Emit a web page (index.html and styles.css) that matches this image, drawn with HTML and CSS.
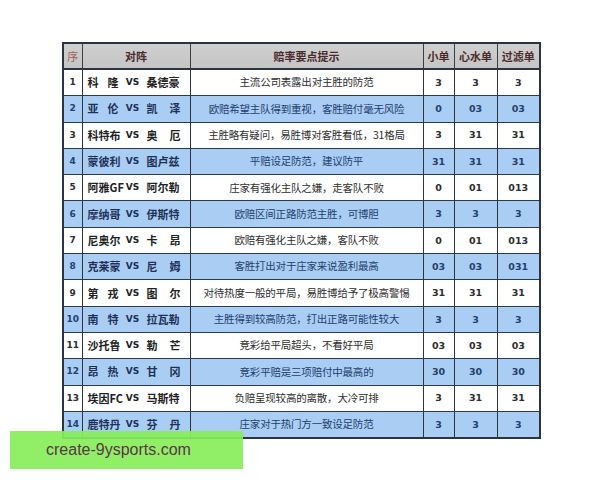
FILE: index.html
```html
<!DOCTYPE html>
<html lang="zh-CN">
<head>
<meta charset="utf-8">
<title>赔率要点提示</title>
<link rel="stylesheet" href="styles.css">
</head>
<body>
<div class="page">
  <table class="odds">
    <colgroup>
      <col class="c-no"><col class="c-match"><col class="c-tip"><col class="c-a"><col class="c-b"><col class="c-c">
    </colgroup>
    <thead>
      <tr><th class="h-no">序</th><th>对阵</th><th>赔率要点提示</th><th>小单</th><th>心水单</th><th>过滤单</th></tr>
    </thead>
    <tbody>
      <tr><td class="no">1</td><td><div class="m"><span class="t j">科隆</span><span class="vs">VS</span><span class="t">桑德豪</span></div></td><td class="tip">主流公司表露出对主胜的防范</td><td class="n">3</td><td class="n">3</td><td class="n">3</td></tr>
      <tr class="blue"><td class="no">2</td><td><div class="m"><span class="t j">亚伦</span><span class="vs">VS</span><span class="t j">凯泽</span></div></td><td class="tip">欧赔希望主队得到重视，客胜赔付毫无风险</td><td class="n">0</td><td class="n">03</td><td class="n">03</td></tr>
      <tr><td class="no">3</td><td><div class="m"><span class="t">科特布</span><span class="vs">VS</span><span class="t j">奥厄</span></div></td><td class="tip">主胜略有疑问，易胜博对客胜看低，31格局</td><td class="n">3</td><td class="n">31</td><td class="n">31</td></tr>
      <tr class="blue"><td class="no">4</td><td><div class="m"><span class="t">蒙彼利</span><span class="vs">VS</span><span class="t">图卢兹</span></div></td><td class="tip">平赔设足防范，建议防平</td><td class="n">31</td><td class="n">31</td><td class="n">31</td></tr>
      <tr><td class="no">5</td><td><div class="m"><span class="t">阿雅GF</span><span class="vs">VS</span><span class="t">阿尔勒</span></div></td><td class="tip">庄家有强化主队之嫌，走客队不败</td><td class="n">0</td><td class="n">01</td><td class="n">013</td></tr>
      <tr class="blue"><td class="no">6</td><td><div class="m"><span class="t">摩纳哥</span><span class="vs">VS</span><span class="t">伊斯特</span></div></td><td class="tip">欧赔区间正路防范主胜，可博胆</td><td class="n">3</td><td class="n">3</td><td class="n">3</td></tr>
      <tr><td class="no">7</td><td><div class="m"><span class="t">尼奥尔</span><span class="vs">VS</span><span class="t j">卡昂</span></div></td><td class="tip">欧赔有强化主队之嫌，客队不败</td><td class="n">0</td><td class="n">01</td><td class="n">013</td></tr>
      <tr class="blue"><td class="no">8</td><td><div class="m"><span class="t">克莱蒙</span><span class="vs">VS</span><span class="t j">尼姆</span></div></td><td class="tip">客胜打出对于庄家来说盈利最高</td><td class="n">03</td><td class="n">03</td><td class="n">031</td></tr>
      <tr><td class="no">9</td><td><div class="m"><span class="t j">第戎</span><span class="vs">VS</span><span class="t j">图尔</span></div></td><td class="tip">对待热度一般的平局，易胜博给予了极高警惕</td><td class="n">31</td><td class="n">31</td><td class="n">31</td></tr>
      <tr class="blue"><td class="no">10</td><td><div class="m"><span class="t j">南特</span><span class="vs">VS</span><span class="t">拉瓦勒</span></div></td><td class="tip">主胜得到较高防范，打出正路可能性较大</td><td class="n">3</td><td class="n">3</td><td class="n">3</td></tr>
      <tr><td class="no">11</td><td><div class="m"><span class="t">沙托鲁</span><span class="vs">VS</span><span class="t j">勒芒</span></div></td><td class="tip">竞彩给平局超头，不看好平局</td><td class="n">03</td><td class="n">03</td><td class="n">03</td></tr>
      <tr class="blue"><td class="no">12</td><td><div class="m"><span class="t j">昂热</span><span class="vs">VS</span><span class="t j">甘冈</span></div></td><td class="tip">竞彩平赔是三项赔付中最高的</td><td class="n">30</td><td class="n">30</td><td class="n">30</td></tr>
      <tr><td class="no">13</td><td><div class="m"><span class="t">埃因FC</span><span class="vs">VS</span><span class="t">马斯特</span></div></td><td class="tip">负赔呈现较高的离散，大冷可排</td><td class="n">3</td><td class="n">31</td><td class="n">31</td></tr>
      <tr class="blue"><td class="no">14</td><td><div class="m"><span class="t">鹿特丹</span><span class="vs">VS</span><span class="t j">芬丹</span></div></td><td class="tip">庄家对于热门方一致设足防范</td><td class="n">3</td><td class="n">3</td><td class="n">3</td></tr>
    </tbody>
  </table>
  <div class="badge">create-9ysports.com</div>
</div>
</body>
</html>
```

FILE: styles.css
```css
html, body {
  margin: 0;
  padding: 0;
  background: #ffffff;
}

.page {
  position: relative;
  width: 600px;
  height: 480px;
  padding: 42px 0 0 62px;
  box-sizing: border-box;
  font-family: "Noto Sans CJK SC", "DejaVu Sans", sans-serif;
}

.odds {
  border-collapse: collapse;
  table-layout: fixed;
  width: 477px;
  border: 2px solid #2a3442;
}

.c-no { width: 19px; }
.c-match { width: 108px; }
.c-tip { width: 233px; }
.c-a { width: 31px; }
.c-b { width: 43px; }
.c-c { width: 43px; }

.odds th {
  height: 24px;
  padding: 0;
  background: linear-gradient(#cfcfcf, #c4c4c4);
  border: 1px solid #3a3f46;
  border-bottom: 2px solid #2a3442;
  font-size: 11px;
  font-weight: 700;
  color: #4a2c2c;
  text-align: center;
  line-height: 1;
}

.odds th.h-no {
  font-weight: 400;
  color: #a06060;
}

.odds td {
  height: 25.3px;
  padding: 0;
  border-left: 1px solid #2e3540;
  border-right: 1px solid #2e3540;
  border-bottom: 1px solid #2a3a55;
  color: #2e2e2e;
  text-align: center;
  font-size: 10.5px;
  line-height: 1;
}

.odds tr.blue td {
  background: #a9cdf3;
  color: #25406e;
}

.odds td.no {
  font-family: "DejaVu Sans", sans-serif;
  font-size: 9px;
  font-weight: 700;
}

.odds td.n {
  font-family: "DejaVu Sans", sans-serif;
  font-size: 9.5px;
  font-weight: 700;
}

.odds td.tip {
  font-size: 10.5px;
  letter-spacing: -0.2px;
}

.m {
  display: grid;
  grid-template-columns: 31px 28px 34px;
  align-items: center;
  padding-left: 5px;
  font-weight: 700;
  font-size: 11px;
  color: #222;
}

.blue .m {
  color: #1f3157;
}

.m .t {
  text-align: left;
  white-space: nowrap;
}

.m .t.j {
  text-align: justify;
  text-align-last: justify;
}

.m .vs {
  font-family: "DejaVu Sans", sans-serif;
  font-size: 9px;
  text-align: center;
}

.badge {
  position: absolute;
  left: 10px;
  top: 431px;
  width: 233px;
  height: 38px;
  box-sizing: border-box;
  padding-left: 36px;
  display: flex;
  align-items: center;
  background: rgba(136, 238, 90, 0.92);
  font-family: "Liberation Sans", Arial, sans-serif;
  font-size: 16px;
  color: #5a3646;
}
```
